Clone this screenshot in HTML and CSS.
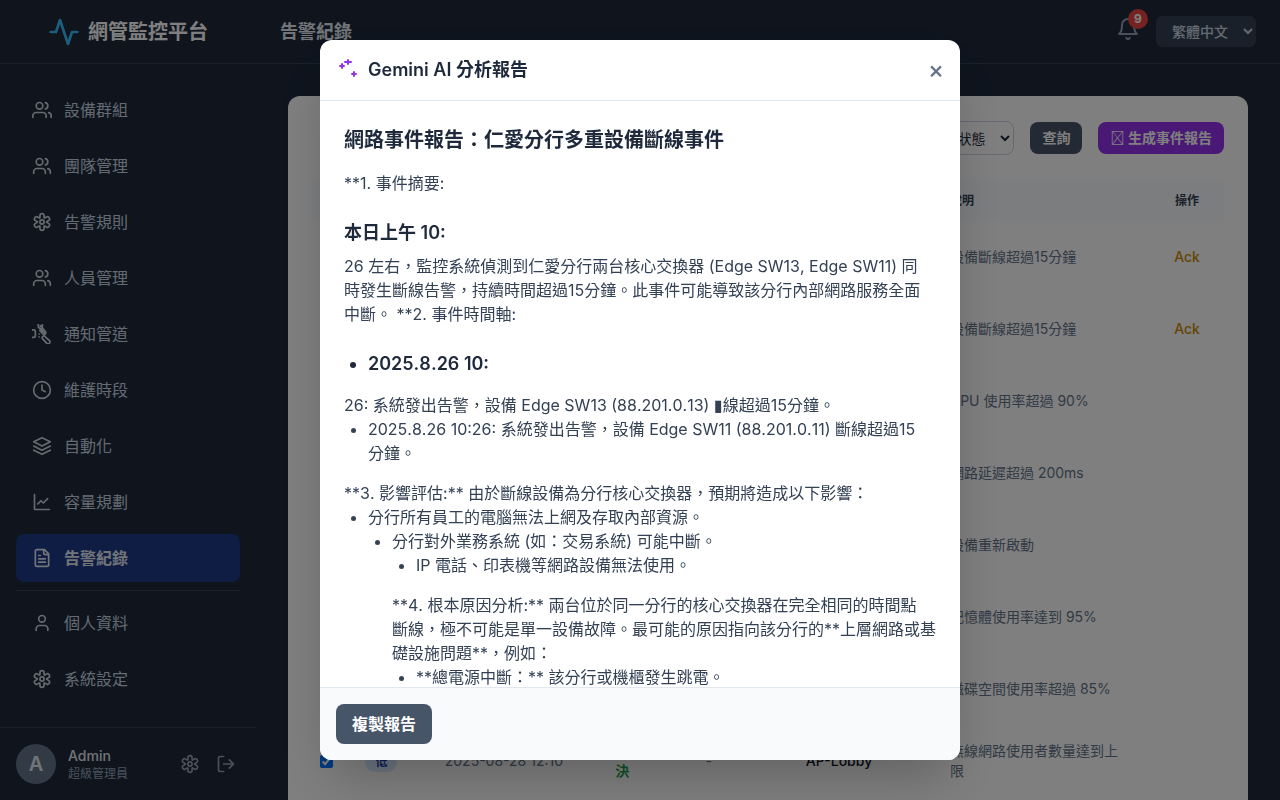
FILE: index.html
```html
<!DOCTYPE html>
<html lang="zh-Hant">
<head>
<meta charset="utf-8">
<meta name="viewport" content="width=device-width, initial-scale=1">
<title>網管監控平台</title>
<link rel="stylesheet" href="styles.css">
</head>
<body>
<svg class="sprite" aria-hidden="true">
  <symbol id="users" viewBox="0 0 24 24"><path d="M16 21v-2a4 4 0 0 0-4-4H6a4 4 0 0 0-4 4v2"/><circle cx="9" cy="7" r="4"/><path d="M22 21v-2a4 4 0 0 0-3-3.87M16 3.13a4 4 0 0 1 0 7.75"/></symbol>
  <symbol id="group" viewBox="0 0 24 24"><path d="M17 21v-2a4 4 0 0 0-4-4H5a4 4 0 0 0-4 4v2"/><circle cx="9" cy="7" r="4"/><path d="M23 21v-2a4 4 0 0 0-3-3.87M16 3.13a4 4 0 0 1 0 7.75"/></symbol>
  <symbol id="gear" viewBox="0 0 24 24"><path d="M9.500 7V4.400a2.500 2.500 0 0 1 5 0V7L15.080 7.330 17.330 6.030A2.500 2.500 0 0 1 19.830 10.370L17.580 11.670V12.330L19.830 13.630A2.500 2.500 0 0 1 17.330 17.970L15.080 16.670 14.500 17V19.600A2.500 2.500 0 0 1 9.500 19.600V17L8.920 16.670 6.670 17.970A2.500 2.500 0 0 1 4.170 13.630L6.420 12.330V11.670L4.170 10.370A2.500 2.500 0 0 1 6.670 6.030L8.920 7.330z"/><circle cx="12" cy="12" r="2.500"/></symbol>
  <symbol id="channel" viewBox="0 0 24 24"><path d="M-1 7h3a2 2 0 0 1 2 2v5a2 2 0 0 1-2 2h-3M7.500-1v4l3 4M12.500-1v5M7.500 3.500l5 5.500M10 2l6 7a2 2 0 0 1-3 3L9.500 8M11 5l4 6M8.500 12v.1M8.500 15.500v.1M12.500 17.500a2 2 0 0 1 3.500-2l5 4.500a2.300 2.300 0 0 1-3.500 3z"/></symbol>
  <symbol id="clock" viewBox="0 0 24 24"><circle cx="12" cy="12" r="10"/><path d="M12 6v6l4 2"/></symbol>
  <symbol id="layers" viewBox="0 0 24 24"><path d="M12 2L2 7l10 5 10-5-10-5zM2 17l10 5 10-5M2 12l10 5 10-5"/></symbol>
  <symbol id="chart" viewBox="0 0 24 24"><path d="M3 3v18h18M18.700 8l-5.100 5.200-2.800-2.700L7 14.300"/></symbol>
  <symbol id="file" viewBox="0 0 24 24"><path d="M15 2H6a2 2 0 0 0-2 2v16a2 2 0 0 0 2 2h12a2 2 0 0 0 2-2V7zM14 2v4a2 2 0 0 0 2 2h4M10 9H8M16 13H8M16 17H8"/></symbol>
  <symbol id="user" viewBox="0 0 24 24"><path d="M19 21v-2a4 4 0 0 0-4-4H9a4 4 0 0 0-4 4v2"/><circle cx="12" cy="7" r="4"/></symbol>
  <symbol id="logout" viewBox="0 0 24 24"><path d="M9 21H5a2 2 0 0 1-2-2V5a2 2 0 0 1 2-2h4M16 17l5-5-5-5M21 12H9"/></symbol>
  <symbol id="pulse" viewBox="0 0 24 24"><path d="M22 12h-4l-3 9L9 3l-3 9H2"/></symbol>
  <symbol id="bell" viewBox="0 0 24 24"><path d="M6 8a6 6 0 0 1 12 0c0 7 3 9 3 9H3s3-2 3-9M10.300 21a1.940 1.940 0 0 0 3.400 0"/></symbol>
  <symbol id="sparkles" viewBox="0 0 24 24"><path d="M6 6v4M4 8h4M12 2v4M9 4h6M18 14v4M16 16h4"/></symbol>
</svg>

<div class="app">
  <header class="topbar">
    <div class="brand"><svg class="icon brand-icon"><use href="#pulse"/></svg><span>網管監控平台</span></div>
    <h1 class="page-title">告警紀錄</h1>
    <div class="top-actions">
      <button class="bell" type="button" aria-label="通知"><svg class="icon bell-icon"><use href="#bell"/></svg><span class="badge">9</span></button>
      <select class="lang" aria-label="語言"><option>繁體中文</option></select>
    </div>
  </header>

  <div class="body">
    <aside class="sidebar">
      <nav class="nav">
        <a class="nav-item" href="#"><svg class="icon"><use href="#group"/></svg>設備群組</a>
        <a class="nav-item" href="#"><svg class="icon"><use href="#users"/></svg>團隊管理</a>
        <a class="nav-item" href="#"><svg class="icon"><use href="#gear"/></svg>告警規則</a>
        <a class="nav-item" href="#"><svg class="icon"><use href="#users"/></svg>人員管理</a>
        <a class="nav-item" href="#"><svg class="icon"><use href="#channel"/></svg>通知管道</a>
        <a class="nav-item" href="#"><svg class="icon"><use href="#clock"/></svg>維護時段</a>
        <a class="nav-item" href="#"><svg class="icon"><use href="#layers"/></svg>自動化</a>
        <a class="nav-item" href="#"><svg class="icon"><use href="#chart"/></svg>容量規劃</a>
        <a class="nav-item active" href="#" aria-current="page"><svg class="icon"><use href="#file"/></svg>告警紀錄</a>
        <hr class="nav-divider">
        <a class="nav-item" href="#"><svg class="icon"><use href="#user"/></svg>個人資料</a>
        <a class="nav-item" href="#"><svg class="icon"><use href="#gear"/></svg>系統設定</a>
      </nav>
      <div class="account">
        <span class="avatar">A</span>
        <div class="who"><span class="name">Admin</span><span class="role">超級管理員</span></div>
        <button class="icon-btn" type="button" aria-label="設定"><svg class="icon"><use href="#gear"/></svg></button>
        <button class="icon-btn" type="button" aria-label="登出"><svg class="icon"><use href="#logout"/></svg></button>
      </div>
    </aside>

    <main class="main">
      <section class="card">
        <div class="toolbar">
          <select class="filter" aria-label="狀態"><option>所有狀態</option></select>
          <button class="btn" type="button">查詢</button>
          <button class="btn purple" type="button"><span class="glyph">&#xE000;</span> 生成事件報告</button>
        </div>
        <table class="table">
          <colgroup><col class="c-check"><col class="c-level"><col class="c-time"><col class="c-status"><col class="c-owner"><col class="c-device"><col class="c-desc"><col class="c-action"></colgroup>
          <thead><tr><th class="check"><input type="checkbox" aria-label="全選"></th><th>等級</th><th>時間</th><th>狀態</th><th>處理人</th><th>設備</th><th>說明</th><th class="action">操作</th></tr></thead>
          <tbody>
            <tr><td class="check"><input type="checkbox" aria-label="選取"></td><td></td><td></td><td></td><td></td><td></td><td class="desc">設備斷線超過15分鐘</td><td class="action"><button class="ack" type="button">Ack</button></td></tr>
            <tr><td class="check"><input type="checkbox" aria-label="選取"></td><td></td><td></td><td></td><td></td><td></td><td class="desc">設備斷線超過15分鐘</td><td class="action"><button class="ack" type="button">Ack</button></td></tr>
            <tr><td class="check"><input type="checkbox" aria-label="選取"></td><td></td><td></td><td></td><td></td><td></td><td class="desc">CPU 使用率超過 90%</td><td></td></tr>
            <tr><td class="check"><input type="checkbox" aria-label="選取"></td><td></td><td></td><td></td><td></td><td></td><td class="desc">網路延遲超過 200ms</td><td></td></tr>
            <tr><td class="check"><input type="checkbox" aria-label="選取"></td><td></td><td></td><td></td><td></td><td></td><td class="desc">設備重新啟動</td><td></td></tr>
            <tr><td class="check"><input type="checkbox" aria-label="選取"></td><td></td><td></td><td></td><td></td><td></td><td class="desc">記憶體使用率達到 95%</td><td></td></tr>
            <tr><td class="check"><input type="checkbox" aria-label="選取"></td><td></td><td></td><td></td><td></td><td></td><td class="desc">磁碟空間使用率超過 85%</td><td></td></tr>
            <tr><td class="check"><input type="checkbox" aria-label="選取" checked></td><td><span class="pill">低</span></td><td>2025-08-28 12:10</td><td class="status">已解決</td><td>-</td><td class="device">AP-Lobby</td><td class="desc">無線網路使用者數量達到上限</td><td></td></tr>
          </tbody>
        </table>
      </section>
    </main>
  </div>
</div>

<div class="overlay">
  <div class="modal" role="dialog" aria-modal="true" aria-labelledby="modal-title">
    <header class="modal-head">
      <svg class="icon spark"><use href="#sparkles"/></svg>
      <h2 class="modal-title" id="modal-title">Gemini AI 分析報告</h2>
      <button class="close" type="button" aria-label="關閉">×</button>
    </header>
    <div class="report">
      <h3 class="report-title">網路事件報告：仁愛分行多重設備斷線事件</h3>
      <p>**1. 事件摘要:</p>
      <h4>本日上午 10:</h4>
      <p>26 左右，監控系統偵測到仁愛分行兩台核心交換器 (Edge SW13, Edge SW11) 同<br>時發生斷線告警，持續時間超過15分鐘。此事件可能導致該分行內部網路服務全面<br>中斷。 **2. 事件時間軸:</p>
      <ul class="lead"><li>2025.8.26 10:</li></ul>
      <p>26: 系統發出告警，設備 Edge SW13 (88.201.0.13) <span class="block">▮</span>線超過15分鐘。</p>
      <ul><li>2025.8.26 10:26: 系統發出告警，設備 Edge SW11 (88.201.0.11) 斷線超過15<br>分鐘。</li></ul>
      <p class="spaced">**3. 影響評估:** 由於斷線設備為分行核心交換器，預期將造成以下影響：</p>
      <ul>
        <li>分行所有員工的電腦無法上網及存取內部資源。
          <ul>
            <li>分行對外業務系統 (如：交易系統) 可能中斷。
              <ul><li>IP 電話、印表機等網路設備無法使用。</li></ul>
              <p class="spaced">**4. 根本原因分析:** 兩台位於同一分行的核心交換器在完全相同的時間點<br>斷線，極不可能是單一設備故障。最可能的原因指向該分行的**上層網路或基<br>礎設施問題**，例如：</p>
              <ul><li>**總電源中斷：** 該分行或機櫃發生跳電。</li></ul>
            </li>
          </ul>
        </li>
      </ul>
    </div>
    <footer class="modal-foot"><button class="copy" type="button">複製報告</button></footer>
  </div>
</div>
</body>
</html>
```
FILE: styles.css
```css
*, *::before, *::after { box-sizing: border-box; }
body, h1, h2, h3, h4, p, ul, hr { margin: 0; }
body {
  background: #1e293b;
  color: #cbd5e1;
  font-family: Inter, "Noto Sans CJK TC", sans-serif;
  font-size: 16px;
  line-height: 24px;
}
button, select, input { font-family: inherit; }
button { border: 0; padding: 0; background: none; color: inherit; cursor: pointer; }
a { color: inherit; text-decoration: none; }
.sprite { display: none; }
.icon {
  width: 20px;
  height: 20px;
  flex: none;
  fill: none;
  stroke: currentColor;
  stroke-width: 2;
  stroke-linecap: round;
  stroke-linejoin: round;
}

.app { display: flex; flex-direction: column; height: 100vh; overflow: hidden; }
.topbar {
  display: flex;
  align-items: center;
  flex: none;
  height: 64px;
  padding-right: 24px;
  border-bottom: 1px solid #334155;
}
.brand {
  display: flex;
  align-items: center;
  justify-content: center;
  gap: 8px;
  width: 256px;
  color: #fff;
  font-size: 20px;
  font-weight: 700;
}
.brand-icon { width: 32px; height: 32px; color: #38bdf8; }
.page-title { flex: 1; padding-left: 24px; color: #e2e8f0; font-size: 18px; font-weight: 600; }
.top-actions { display: flex; align-items: center; gap: 16px; }
.bell { position: relative; display: flex; padding: 0; color: #94a3b8; }
.bell-icon { width: 24px; height: 24px; margin-bottom: 6px; }
.badge {
  position: absolute;
  top: -8px;
  right: -8px;
  width: 20px;
  height: 20px;
  border-radius: 50%;
  background: #ef4444;
  color: #fff;
  font-size: 12px;
  font-weight: 700;
  line-height: 20px;
  text-align: center;
}
.lang {
  width: 100px;
  height: 31px;
  padding: 0 0 0 12px;
  border: 0;
  border-radius: 6px;
  background: #334155;
  color: #cbd5e1;
  font-size: 14px;
  font-weight: 500;
}

.body { display: flex; flex: 1; min-height: 0; }
.sidebar { display: flex; flex-direction: column; flex: none; width: 256px; }
.nav {
  display: flex;
  flex: 1;
  flex-direction: column;
  justify-content: flex-end;
  gap: 8px;
  min-height: 0;
  padding: 0 16px 24px;
  overflow: hidden;
}
.nav-item { display: flex; align-items: center; gap: 12px; padding: 12px 16px; border-radius: 8px; }
.nav-item.active { background: #1e3a8a; color: #e2e8f0; font-weight: 600; }
.nav-divider { width: 100%; height: 1px; border: 0; background: #334155; }
.account { display: flex; align-items: center; padding: 16px; border-top: 1px solid #334155; }
.avatar {
  width: 40px;
  height: 40px;
  border-radius: 50%;
  background: #64748b;
  color: #e2e8f0;
  font-size: 20px;
  font-weight: 600;
  line-height: 40px;
  text-align: center;
}
.who { display: flex; flex: 1; flex-direction: column; padding-left: 12px; }
.name { color: #e2e8f0; font-size: 14px; font-weight: 500; line-height: 20px; }
.role { color: #94a3b8; font-size: 12px; line-height: 16px; }
.icon-btn { display: flex; padding: 4px; margin: 0 0 0 8px; color: #94a3b8; }

.main { flex: 1; min-width: 0; padding: 32px; }
.card {
  padding: 24px;
  border-radius: 12px;
  background: #fff;
  color: #64748b;
  font-size: 14px;
  line-height: 20px;
}
.toolbar { display: flex; align-items: center; justify-content: flex-end; gap: 16px; height: 36px; margin-bottom: 24px; }
.filter {
  width: 100px;
  height: 34px;
  padding: 0 0 0 10px;
  border: 1px solid #cbd5e1;
  border-radius: 8px;
  background: #fff;
  color: #1e293b;
  font-size: 14px;
}
.btn {
  padding: 6px 12px;
  border-radius: 8px;
  background: #475569;
  color: #fff;
  font-size: 14px;
  font-weight: 600;
  line-height: 20px;
}
.btn.purple { background: #9333ea; }
.glyph { font-family: "Noto Sans CJK TC", sans-serif; line-height: 14px; }
.table { width: 100%; border-collapse: collapse; table-layout: fixed; text-align: left; }
.c-check { width: 4.1%; }
.c-level { width: 8.7%; }
.c-time { width: 18.7%; }
.c-status { width: 9.9%; }
.c-owner { width: 11%; }
.c-device { width: 15.8%; }
.c-desc { width: 23.7%; }
.c-action { width: 8.1%; }
.table th { padding: 12px 16px; background: #f8fafc; color: #334155; font-size: 12px; font-weight: 600; line-height: 17px; }
.table td { height: 72px; padding: 0 16px; }
.table .check { padding: 0 8px; }
.check input { display: block; width: 13px; height: 13px; margin: 0; accent-color: #0075ff; }
.table .action { padding: 0; text-align: center; }
.ack { color: #ca8a04; font-size: 14px; font-weight: 500; line-height: 20px; }
.table .status { padding-right: 40px; color: #16a34a; font-weight: 600; }
.table .desc { padding-right: 24px; }
.device { color: #0f172a; font-weight: 500; }
.pill {
  display: inline-block;
  padding: 2px 10px;
  border-radius: 10px;
  background: #dbeafe;
  color: #1e40af;
  font-size: 12px;
  font-weight: 600;
  line-height: 16px;
}

.overlay {
  position: fixed;
  inset: 0;
  display: flex;
  align-items: center;
  justify-content: center;
  padding: 16px;
  background: rgba(0, 0, 0, 0.5);
}
.modal {
  display: flex;
  flex-direction: column;
  width: 100%;
  max-width: 640px;
  max-height: 90vh;
  overflow: hidden;
  border-radius: 12px;
  background: #fff;
  box-shadow: 0 25px 50px -12px rgba(0, 0, 0, 0.25);
  color: #334155;
}
.modal-head {
  display: flex;
  align-items: center;
  flex: none;
  gap: 8px;
  padding: 16px;
  border-bottom: 1px solid #e2e8f0;
}
.spark { width: 24px; height: 24px; color: #9333ea; }
.modal-title { flex: 1; color: #1e293b; font-size: 18px; font-weight: 600; line-height: 28px; }
.close { color: #64748b; font-size: 24px; font-weight: 500; line-height: 28px; }
.report { flex: 1; min-height: 0; padding: 24px 16px 24px 24px; overflow-y: auto; scrollbar-width: none; font-kerning: none; }
.report-title { margin-bottom: 16px; color: #1e293b; font-size: 20px; font-weight: 700; line-height: 30px; }
.report h4, .report .lead { color: #1e293b; font-size: 18px; font-weight: 600; line-height: 27px; }
.report h4 { margin: 24px 0 8px; }
.report ul { padding-left: 24px; list-style: disc; }
.report .lead { margin: 24px 0 16px; }
.report .spaced { margin-top: 16px; }
.block { font-family: "DejaVu Sans", sans-serif; line-height: 16px; }
.modal-foot { flex: none; padding: 16px; border-top: 1px solid #e2e8f0; background: #f8fafc; }
.copy {
  display: block;
  padding: 8px 16px;
  border-radius: 8px;
  background: #475569;
  color: #fff;
  font-size: 16px;
  font-weight: 600;
  line-height: 24px;
}
```
